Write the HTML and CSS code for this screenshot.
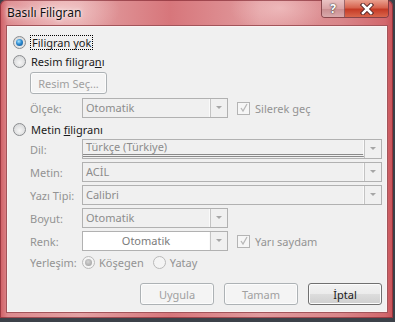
FILE: index.html
```html
<!DOCTYPE html>
<html lang="tr">
<head>
    <meta charset="UTF-8">
    <title>Basılı Filigran</title>
    <link rel="stylesheet" href="styles.css">
</head>
<body>
    <div class="window">
        <div class="titlebar">
            <span class="title">Basılı Filigran</span>
            <div class="caption-buttons">
                <span class="cap help">?</span>
                <span class="cap close">
                    <svg width="16" height="12" viewBox="0 0 16 12">
                        <path d="M4 2 L12 10 M12 2 L4 10" stroke="#5a2a2a" stroke-width="4.5" stroke-linecap="square"/>
                        <path d="M4 2 L12 10 M12 2 L4 10" stroke="#fff" stroke-width="2.5" stroke-linecap="square"/>
                    </svg>
                </span>
            </div>
        </div>

        <div class="client">
            <div class="option first">
                <span class="radio checked"></span>
                <span class="focus">Filigran yok</span>
            </div>
            <div class="option">
                <span class="radio"></span>
                <span>Resim filigra<u>n</u>ı</span>
            </div>

            <div class="sub">
                <button class="btn off pick">Resim Seç...</button>
                <div class="field picture-scale">
                    <span class="label">Ölçek:</span>
                    <div class="combo narrow"><span class="value">Otomatik</span><span class="drop"></span></div>
                    <span class="check"><svg width="10" height="10" viewBox="0 0 10 10"><path d="M2 5 L4 8 L8 1" fill="none" stroke="#b8b8b8" stroke-width="1.3"/></svg></span>
                    <span class="check-label">Silerek geç</span>
                </div>
            </div>

            <div class="option text-option">
                <span class="radio"></span>
                <span>Metin <u>f</u>iligranı</span>
            </div>

            <div class="sub fields">
                <div class="field">
                    <span class="label">Dil:</span>
                    <div class="combo wide lang"><span class="value">Türkçe (Türkiye)</span><span class="drop"></span></div>
                </div>
                <div class="field">
                    <span class="label">Metin:</span>
                    <div class="combo wide"><span class="value">ACİL</span><span class="drop"></span></div>
                </div>
                <div class="field">
                    <span class="label">Yazı Tipi:</span>
                    <div class="combo wide"><span class="value">Calibri</span><span class="drop"></span></div>
                </div>
                <div class="field">
                    <span class="label">Boyut:</span>
                    <div class="combo narrow"><span class="value">Otomatik</span><span class="drop"></span></div>
                </div>
                <div class="field">
                    <span class="label">Renk:</span>
                    <div class="combo narrow colour"><span class="value">Otomatik</span><span class="drop"></span></div>
                    <span class="check"><svg width="10" height="10" viewBox="0 0 10 10"><path d="M2 5 L4 8 L8 1" fill="none" stroke="#b8b8b8" stroke-width="1.3"/></svg></span>
                    <span class="check-label">Yarı saydam</span>
                </div>
                <div class="field layout">
                    <span class="label">Yerleşim:</span>
                    <span class="radio small checked-off"></span>
                    <span class="layout-text">Köşegen</span>
                    <span class="radio small plain-off"></span>
                    <span class="layout-text">Yatay</span>
                </div>
            </div>

            <div class="actions">
                <button class="btn off">Uygula</button>
                <button class="btn off">Tamam</button>
                <button class="btn">İptal</button>
            </div>
        </div>
    </div>
</body>
</html>
```

FILE: styles.css
```css
body {
    margin: 0;
    background: #3c4149;
    font-family: "Noto Sans", "DejaVu Sans", sans-serif;
    font-size: 11px;
    color: #1a1a1a;
}

.window {
    width: 393px;
    height: 318px;
    box-sizing: border-box;
    display: flex;
    flex-direction: column;
    border-radius: 6px 6px 0 0;
    /* red glass frame */
    background:
        radial-gradient(ellipse 60px 30px at 60px 10px, rgba(255, 230, 230, 0.55), rgba(255, 230, 230, 0)),
        radial-gradient(ellipse 50px 25px at 280px 8px, rgba(255, 225, 225, 0.45), rgba(255, 225, 225, 0)),
        linear-gradient(90deg, #cf5d63 0, #dd8a8e 8px, #e3a2a4 80px, #d7767b 170px, #e19b9e 260px, #d9868a 340px, #d2686d 385px, #c85258 393px);
    box-shadow: inset 0 0 0 1px rgba(120, 30, 40, 0.6);
}

.titlebar {
    height: 25px;
    display: flex;
    padding-left: 7px;
}

.title {
    font-size: 12px;
    line-height: 25px;
    color: #111;
    text-shadow: 0 0 6px rgba(255, 255, 255, 0.9), 0 0 3px rgba(255, 255, 255, 0.8);
}

.caption-buttons {
    margin-left: auto;
    margin-right: 4px;
    display: flex;
    align-self: flex-start;
    height: 17px;
    border: 1px solid rgba(110, 50, 55, 0.75);
    border-top: none;
    border-radius: 0 0 4px 4px;
    overflow: hidden;
}

.cap {
    display: flex;
    align-items: center;
    justify-content: center;
}

.help {
    width: 22px;
    border-right: 1px solid rgba(110, 50, 55, 0.6);
    background: linear-gradient(#eac3c3, #d9a3a5 50%, #c98d90 51%, #d9a9ab);
    color: #fff;
    font-weight: bold;
    font-size: 12px;
    text-shadow: 0 0 1px #555, 0 0 1px #555, 0 0 2px #555;
}

.close {
    width: 43px;
    background: linear-gradient(#eaa08f, #d7644f 45%, #c53b26 55%, #d9664c);
}

.client {
    flex: 1;
    margin: 0 5px 5px 6px;
    border: 1px solid #a2545a;
    background: #f0f0f0;
    padding: 7px 4px 0 6px;
    box-shadow: inset 0 0 0 1px #fbf3f3;
}

.option {
    display: flex;
    align-items: center;
    height: 19px;
    gap: 3px;
}

.radio {
    width: 11px;
    height: 11px;
    border-radius: 50%;
    border: 1px solid #8a8c8f;
    background: radial-gradient(circle at 50% 60%, #f6f6f6 0, #dadbdc 70%, #cfd0d2 100%);
    position: relative;
    margin-right: 2px;
}

.radio.checked::after {
    content: "";
    position: absolute;
    left: 2px;
    top: 2px;
    width: 7px;
    height: 7px;
    border-radius: 50%;
    background: radial-gradient(circle at 40% 35%, #a9e5ff 0, #2d8ad0 45%, #0d4a86 100%);
}

.focus {
    outline: 1px dotted #000;
    padding: 0 1px;
    line-height: 13px;
}

.sub {
    padding-left: 17px;
}

.btn {
    font-family: inherit;
    font-size: 11px;
    height: 22px;
    width: 74px;
    border: 1px solid #707070;
    border-radius: 3px;
    background: linear-gradient(#f2f2f2, #ebebeb 50%, #dddddd 51%, #cfcfcf);
    color: #1a1a1a;
    padding: 0;
    box-shadow: inset 0 0 0 1px #fcfcfc;
}

.btn.off {
    border-color: #adb2b5;
    background: #f4f4f4;
    color: #a0a0a0;
}

.pick {
    width: 77px;
    margin-top: 1px;
    display: block;
}

.field {
    display: flex;
    align-items: center;
    height: 20px;
}

.picture-scale {
    margin-top: 4px;
}

.text-option {
    margin-top: 2px;
}

.fields {
    display: flex;
    flex-direction: column;
    gap: 3px;
}

.label {
    width: 52px;
    color: #939393;
}

.combo {
    display: flex;
    height: 20px;
    box-sizing: border-box;
    border: 1px solid #b1b1b1;
    background: #f0f0f0;
}

.combo.wide {
    width: 300px;
}

.combo.narrow {
    width: 146px;
}

.combo .value {
    flex: 1;
    padding-left: 3px;
    line-height: 17px;
    color: #8c8c8c;
    border-right: 1px solid #fafafa;
}

/* the language box shows a doubled underline */
.combo.lang .value {
    border-bottom: 3px double #8a8a8a;
    height: 14px;
    line-height: 13px;
    overflow: hidden;
}

.combo.colour .value {
    background: #fff;
    text-align: center;
    padding-left: 0;
    color: #7b7b7b;
}

.drop {
    width: 16px;
    border-left: 1px solid #c4c4c4;
    position: relative;
}

.drop::after {
    content: "";
    position: absolute;
    left: 5px;
    top: 7px;
    border-left: 3px solid transparent;
    border-right: 3px solid transparent;
    border-top: 3px solid #a6a6a6;
}

.check {
    width: 11px;
    height: 11px;
    border: 1px solid #b4b4b4;
    background: #f6f6f6;
    margin-left: 9px;
    margin-right: 5px;
    display: flex;
    align-items: center;
    justify-content: center;
}

.check-label {
    color: #939393;
}

.layout {
    height: 17px;
}

.radio.small {
    border-color: #b9b9b9;
    background: #f4f4f4;
}

.radio.checked-off::after {
    content: "";
    position: absolute;
    left: 2px;
    top: 2px;
    width: 7px;
    height: 7px;
    border-radius: 50%;
    background: radial-gradient(circle at 45% 40%, #d4d4d4, #9a9a9a);
}

.layout-text {
    color: #939393;
    margin-left: 2px;
    margin-right: 9px;
}

.actions {
    display: flex;
    justify-content: flex-end;
    gap: 10px;
    margin-top: 12px;
    margin-right: 1px;
}
```
